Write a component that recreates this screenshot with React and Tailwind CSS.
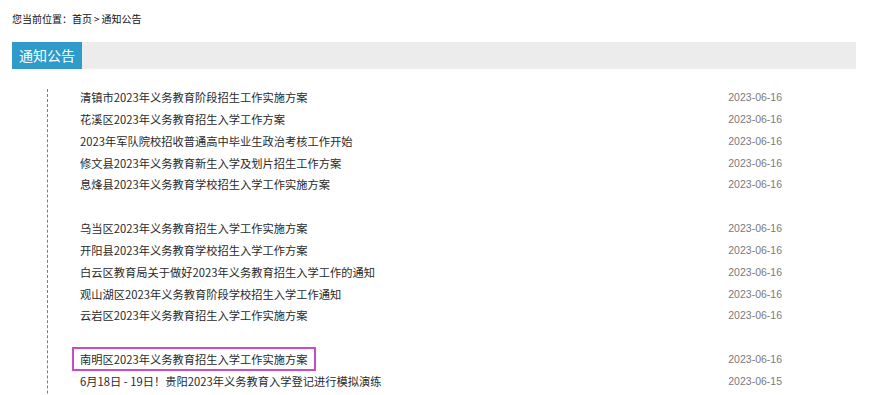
import React from "react";

const groups = [
  [
    ["清镇市2023年义务教育阶段招生工作实施方案", "2023-06-16"],
    ["花溪区2023年义务教育招生入学工作方案", "2023-06-16"],
    ["2023年军队院校招收普通高中毕业生政治考核工作开始", "2023-06-16"],
    ["修文县2023年义务教育新生入学及划片招生工作方案", "2023-06-16"],
    ["息烽县2023年义务教育学校招生入学工作实施方案", "2023-06-16"],
  ],
  [
    ["乌当区2023年义务教育招生入学工作实施方案", "2023-06-16"],
    ["开阳县2023年义务教育学校招生入学工作方案", "2023-06-16"],
    ["白云区教育局关于做好2023年义务教育招生入学工作的通知", "2023-06-16"],
    ["观山湖区2023年义务教育阶段学校招生入学工作通知", "2023-06-16"],
    ["云岩区2023年义务教育招生入学工作实施方案", "2023-06-16"],
  ],
  [
    ["南明区2023年义务教育招生入学工作实施方案", "2023-06-16", true],
    ["6月18日 - 19日！贵阳2023年义务教育入学登记进行模拟演练", "2023-06-15"],
  ],
];

const cjk = { fontFamily: '"Noto Sans CJK SC", "Liberation Sans", sans-serif' };
const dateFont = { fontFamily: '"Liberation Sans", Arial, sans-serif' };

function Row({ title, date, hl }) {
  return (
    <li className="flex h-[16px] items-center justify-between">
      <span className="relative text-[11.25px] leading-[16px] text-[#2a2a2a]" style={cjk}>
        {title}
        {hl && (
          <span className="pointer-events-none absolute left-[-8px] right-[-9px] top-[-4px] bottom-[-4px] border-2 border-[#c94bc9]" />
        )}
      </span>
      <span className="text-[10.5px] leading-[16px] text-[#7a7a7a]" style={dateFont}>
        {date}
      </span>
    </li>
  );
}

export default function App() {
  const rows = [];
  groups.forEach((g, gi) => {
    if (gi > 0) rows.push(<li key={"sp" + gi} className="h-[16px]" />);
    g.forEach((r, i) => rows.push(<Row key={gi + "-" + i} title={r[0]} date={r[1]} hl={r[2]} />));
  });
  return (
    <div className="h-[395px] w-[870px] overflow-hidden bg-white pl-[12px] pr-[14px]">
      <div className="flex h-[36px] items-center pt-[1px] text-[10px] text-[#111]" style={cjk}>
        <span>您当前位置：首页</span>
        <span className="mx-[2px]">&gt;</span>
        <span>通知公告</span>
      </div>
      <div className="mt-[6px] flex h-[27px] bg-[#ececec]">
        <div
          className="flex w-[70px] items-center justify-center bg-[#2e9bcb] text-[14px] text-white"
          style={cjk}
        >
          通知公告
        </div>
      </div>
      <ul className="ml-[35px] mt-[20px] mr-[74px] flex h-[400px] flex-col gap-[5.85px] border-l border-dashed border-[#3f8fc4] pl-[32px]">
        {rows}
      </ul>
    </div>
  );
}
